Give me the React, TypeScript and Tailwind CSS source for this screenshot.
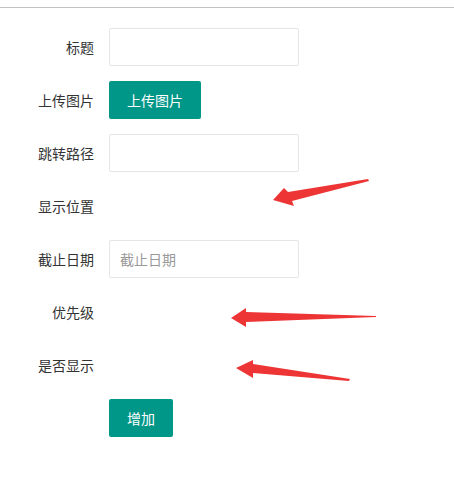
export default function App() {
  const font = "font-['Microsoft_YaHei','Noto_Sans_CJK_SC',sans-serif]";

  return (
    <div className={`relative w-[454px] h-[499px] bg-white text-[14px] text-[#333] ${font}`}>
      <div className="h-[8px] border-b border-[#c2c2c2]" />

      <form className="pt-[20px]">
        <div className="flex mb-[15px]">
          <label className="w-[109px] pr-[15px] py-[9px] text-right leading-[20px]">标题</label>
          <input type="text" className="w-[190px] h-[38px] border border-[#e6e6e6] rounded-[2px] px-[10px] outline-none" />
        </div>

        <div className="flex mb-[15px]">
          <label className="w-[109px] pr-[15px] py-[9px] text-right leading-[20px]">上传图片</label>
          <button type="button" className="h-[38px] px-[18px] bg-[#009688] text-white rounded-[2px] leading-[38px]">
            上传图片
          </button>
        </div>

        <div className="flex mb-[15px]">
          <label className="w-[109px] pr-[15px] py-[9px] text-right leading-[20px]">跳转路径</label>
          <input type="text" className="w-[190px] h-[38px] border border-[#e6e6e6] rounded-[2px] px-[10px] outline-none" />
        </div>

        <div className="flex mb-[15px] h-[38px]">
          <label className="w-[109px] pr-[15px] py-[9px] text-right leading-[20px]">显示位置</label>
        </div>

        <div className="flex mb-[15px]">
          <label className="w-[109px] pr-[15px] py-[9px] text-right leading-[20px]">截止日期</label>
          <input
            type="text"
            placeholder="截止日期"
            className="w-[190px] h-[38px] border border-[#e6e6e6] rounded-[2px] px-[10px] outline-none placeholder:text-[#999]"
          />
        </div>

        <div className="flex mb-[15px] h-[38px]">
          <label className="w-[109px] pr-[15px] py-[9px] text-right leading-[20px]">优先级</label>
        </div>

        <div className="flex mb-[15px] h-[38px]">
          <label className="w-[109px] pr-[15px] py-[9px] text-right leading-[20px]">是否显示</label>
        </div>

        <div className="flex">
          <div className="w-[109px]" />
          <button type="button" className="h-[38px] px-[18px] bg-[#009688] text-white rounded-[2px] leading-[38px]">
            增加
          </button>
        </div>
      </form>

      {/* hand-drawn red arrows over the form */}
      <svg className="absolute left-0 top-0 pointer-events-none" width="454" height="499" viewBox="0 0 454 499">
        <g fill="#ee3535">
          <path d="M368 179 L369 181 L292 201 L294 206 L273 200 L284 188 L288 192 Z" />
          <path d="M376 316 L376 317 L246 322 L246 327 L231 318 L246 308 L246 312 Z" />
          <path d="M350 379 L349 381 L253 373 L253 378 L236 368 L253 360 L253 364 Z" />
        </g>
      </svg>
    </div>
  );
}
